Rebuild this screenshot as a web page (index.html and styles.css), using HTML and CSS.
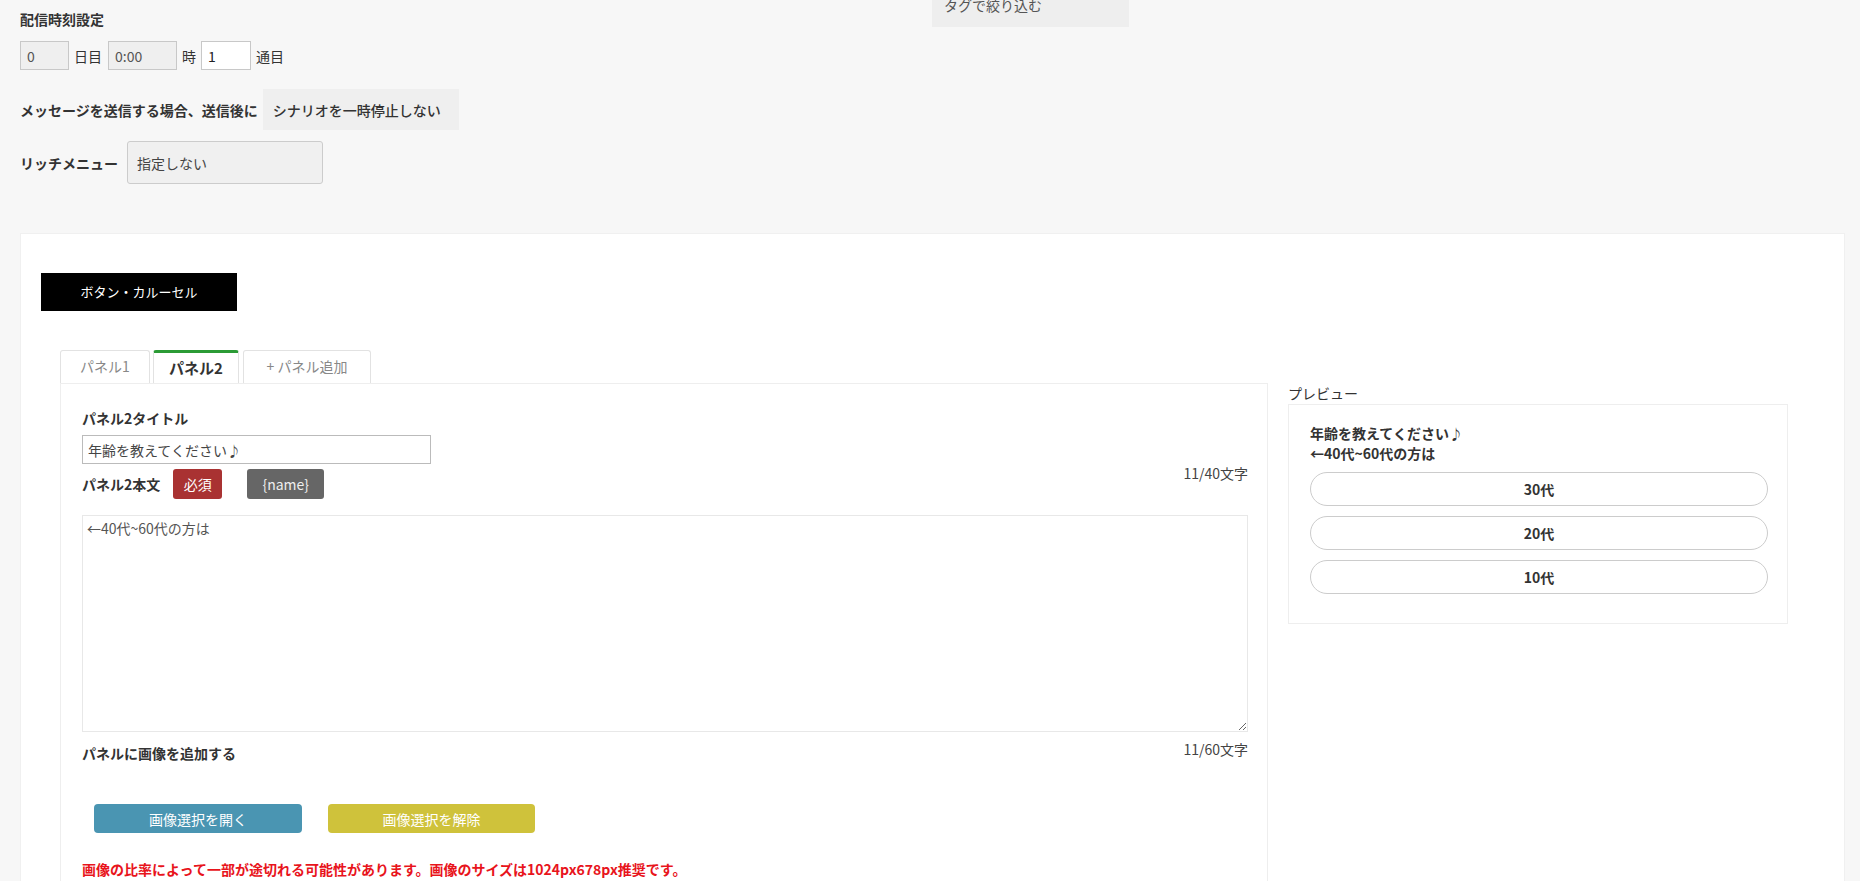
FILE: index.html
```html
<!DOCTYPE html>
<html>
<head>
    <meta charset="utf-8">
    <meta name="viewport" content="width=device-width, initial-scale=1.0">
    <title>ステップ配信 - メッセージ編集</title>
    <link rel="stylesheet" href="styles.css">
</head>
<body>
    <div class="top">
        <div class="settings">
            <div class="field-title">配信時刻設定</div>
            <div class="timing">
                <input type="text" class="num-input" value="0" disabled>
                <span>日目</span>
                <input type="text" class="time-input" value="0:00" disabled>
                <span>時</span>
                <input type="text" class="num-input active" value="1">
                <span>通目</span>
            </div>

            <div class="setting-row pause-row">
                <span class="setting-label">メッセージを送信する場合、送信後に</span>
                <select class="pause-select">
                    <option>シナリオを一時停止しない</option>
                </select>
            </div>

            <div class="setting-row rich-row">
                <span class="setting-label">リッチメニュー</span>
                <select class="rich-select">
                    <option>指定しない</option>
                </select>
            </div>
        </div>
        <div class="tag-filter">タグで絞り込む</div>
    </div>

    <div class="card">
        <div class="type-btn">ボタン・カルーセル</div>

        <div class="editor">
            <div class="editor-main">
                <div class="tabs">
                    <div class="tab">パネル1</div>
                    <div class="tab active">パネル2</div>
                    <div class="tab add">+ パネル追加</div>
                </div>

                <div class="panel">
                    <div class="field-label">パネル2タイトル</div>
                    <input type="text" class="title-input" value="年齢を教えてください♪">

                    <div class="body-head">
                        <span class="field-label">パネル2本文</span>
                        <span class="badge required">必須</span>
                        <span class="badge name-tag">{name}</span>
                        <span class="counter">11/40文字</span>
                    </div>
                    <textarea class="body-input">←40代~60代の方は</textarea>

                    <div class="image-head">
                        <span class="field-label">パネルに画像を追加する</span>
                        <span class="counter">11/60文字</span>
                    </div>

                    <div class="image-buttons">
                        <button class="btn btn-open">画像選択を開く</button>
                        <button class="btn btn-clear">画像選択を解除</button>
                    </div>

                    <p class="warning">画像の比率によって一部が途切れる可能性があります。画像のサイズは1024px678px推奨です。</p>
                </div>
            </div>

            <div class="preview">
                <div class="preview-label">プレビュー</div>
                <div class="preview-box">
                    <div class="preview-text">年齢を教えてください♪<br>←40代~60代の方は</div>
                    <div class="preview-btn">30代</div>
                    <div class="preview-btn">20代</div>
                    <div class="preview-btn">10代</div>
                </div>
            </div>
        </div>
    </div>
</body>
</html>
```

FILE: styles.css
```css
:root {
    --bg-color: #f7f7f7;
    --text-color: #333;
    --line-color: #e8e8e8;
}

body {
    margin: 0;
    background-color: var(--bg-color);
    color: var(--text-color);
    font-family: "Noto Sans CJK JP", "Noto Sans", sans-serif;
    font-size: 14px;
    line-height: 18px;
    overflow: hidden;
}

input,
select,
textarea,
button {
    font-family: inherit;
    font-size: 14px;
    box-sizing: border-box;
}

.top {
    display: flex;
    padding-left: 20px;
}

.settings {
    width: 912px;
    padding-top: 10px;
}

.field-title {
    font-weight: 700;
}

.timing {
    display: flex;
    align-items: center;
    gap: 5px;
    margin-top: 13px;
}

.timing input {
    height: 29px;
    border: 1px solid #c8c8c8;
    background-color: #efefef;
    color: #555;
    padding: 0 6px;
}

.num-input {
    width: 49px;
}

.time-input {
    width: 69px;
    margin-left: 1px;
}

.timing .active {
    width: 50px;
    background-color: #fff;
    color: #222;
}

.setting-row {
    display: flex;
    align-items: center;
}

.setting-label {
    font-weight: 700;
}

.pause-row {
    margin-top: 19px;
}

.pause-select {
    appearance: none;
    width: 196px;
    height: 41px;
    margin-left: 5px;
    padding: 0 10px;
    border: none;
    background-color: #efefef;
    color: #333;
    font-weight: 500;
}

.rich-row {
    margin-top: 11px;
}

.rich-select {
    appearance: none;
    width: 196px;
    height: 43px;
    margin-left: 9px;
    padding: 0 9px;
    border: 1px solid #ccc;
    border-radius: 3px;
    background-color: #f0f0f0;
    color: #444;
}

.tag-filter {
    width: 197px;
    height: 41px;
    margin-top: -14px;
    padding-left: 12px;
    box-sizing: border-box;
    background-color: #eee;
    color: #555;
    line-height: 38px;
}

.card {
    margin: 49px 15px 0 20px;
    padding: 39px 20px 40px;
    background-color: #fff;
    border: 1px solid #f0f0f0;
    min-height: 700px;
}

.type-btn {
    width: 196px;
    height: 38px;
    background-color: #000;
    color: #fff;
    font-size: 13px;
    line-height: 38px;
    text-align: center;
}

.editor {
    display: flex;
    margin-top: 39px;
    margin-left: 19px;
}

.editor-main {
    width: 1208px;
}

.tabs {
    display: flex;
    gap: 3px;
}

.tab {
    height: 33px;
    box-sizing: border-box;
    border: 1px solid #e2e2e2;
    border-bottom: none;
    border-radius: 3px 3px 0 0;
    background-color: #fff;
    color: #888;
    line-height: 31px;
    text-align: center;
    width: 90px;
}

.tab.active {
    width: 86px;
    border-top: 3px solid #2b9b35;
    color: #333;
    font-size: 15px;
    font-weight: 700;
    line-height: 29px;
}

.tab.add {
    width: 128px;
    margin-left: 1px;
}

.panel {
    border: 1px solid #eee;
    border-bottom: none;
    padding: 25px 19px 0 21px;
    min-height: 500px;
}

.field-label {
    display: block;
    font-weight: 700;
}

.title-input {
    display: block;
    width: 349px;
    height: 29px;
    margin-top: 8px;
    padding: 0 5px;
    border: 1px solid #bbb;
    color: #444;
}

.body-head {
    display: flex;
    align-items: center;
    height: 30px;
    margin-top: 5px;
}

.badge {
    height: 30px;
    border-radius: 3px;
    line-height: 30px;
    text-align: center;
    color: #fff;
}

.required {
    width: 49px;
    margin-left: 13px;
    background-color: #a93232;
}

.name-tag {
    width: 77px;
    margin-left: 25px;
    background-color: #666;
    color: #eee;
}

.counter {
    margin-left: auto;
    align-self: flex-start;
    color: #444;
}

.body-head .counter {
    margin-top: -5px;
}

.body-input {
    display: block;
    width: 100%;
    height: 217px;
    margin-top: 16px;
    padding: 3px 4px;
    border: 1px solid var(--line-color);
    color: #555;
    line-height: 18px;
    resize: vertical;
}

.image-head {
    display: flex;
    margin-top: 8px;
}

.image-head .field-label {
    margin-top: 4px;
}

.image-buttons {
    display: flex;
    gap: 26px;
    margin-top: 42px;
    padding-left: 12px;
}

.btn {
    width: 208px;
    height: 29px;
    border: none;
    border-radius: 4px;
    color: #fff;
    cursor: pointer;
}

.btn-open {
    background-color: #4a95b2;
}

.btn-clear {
    width: 207px;
    background-color: #cfc23b;
}

.warning {
    margin: 27px 0 0;
    color: #e8141c;
    font-weight: 700;
}

.preview {
    width: 500px;
    margin-left: 20px;
    padding-top: 34px;
}

.preview-label {
    color: #333;
}

.preview-box {
    margin-top: 2px;
    padding: 18px 19px 29px 21px;
    border: 1px solid #eee;
}

.preview-text {
    font-weight: 700;
    line-height: 20px;
    margin-bottom: 9px;
}

.preview-btn {
    height: 34px;
    box-sizing: border-box;
    border: 1px solid #ccc;
    border-radius: 17px;
    margin-bottom: 10px;
    font-weight: 700;
    line-height: 32px;
    text-align: center;
}

.preview-btn:last-child {
    margin-bottom: 0;
}
```
